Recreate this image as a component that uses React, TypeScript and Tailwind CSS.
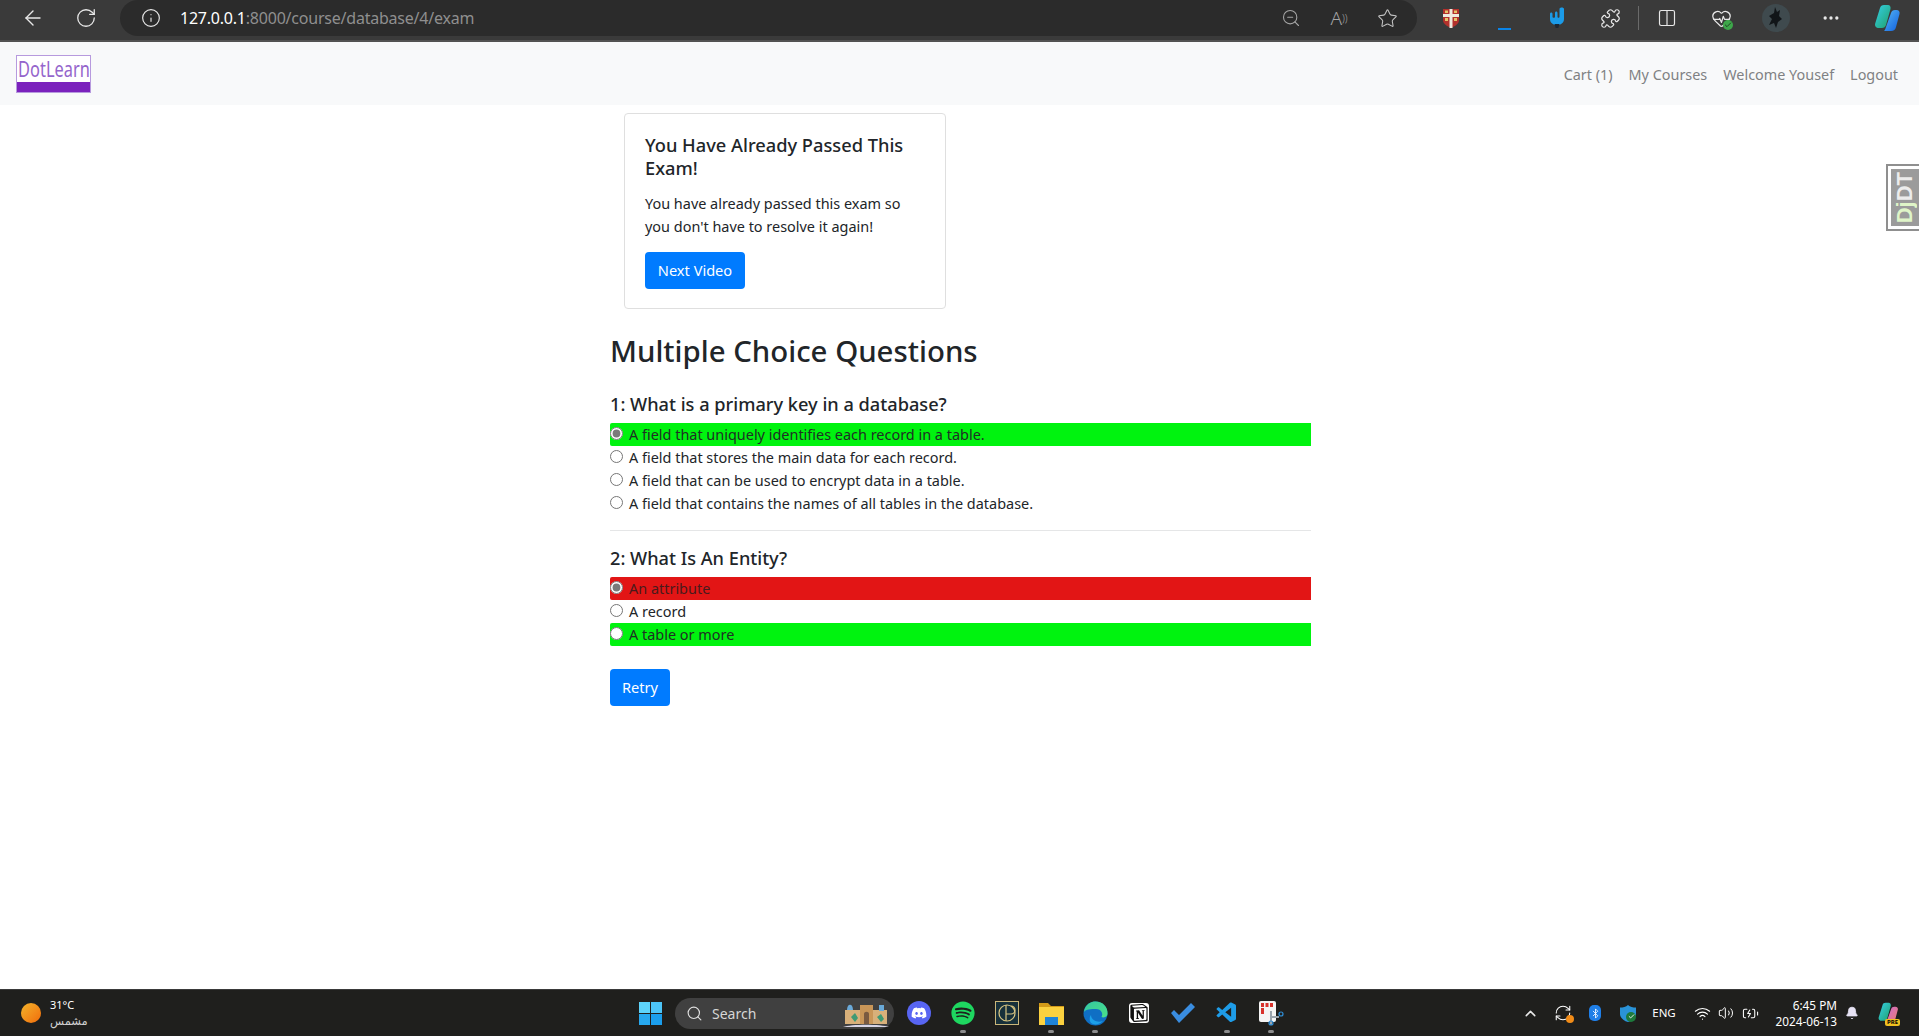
import React from "react";
import { ArrowLeft, RotateCw, Info, ZoomOut, Star, Puzzle, Columns2, MoreHorizontal, Search, ChevronUp, Wifi, Volume2, Bell, RefreshCw, Bluetooth, BatteryCharging, Check, HeartPulse } from "lucide-react";
import { FaDiscord, FaSpotify } from "react-icons/fa";
import { SiNotion } from "react-icons/si";
import { VscVscode } from "react-icons/vsc";

const body = "font-['Noto_Sans','DejaVu_Sans',sans-serif]";

function Copilot({ size = 26, pre = false }: { size?: number; pre?: boolean }) {
  return (
    <svg width={size} height={size} viewBox="0 0 28 28">
      <defs>
        <linearGradient id={pre ? "cpa" : "cpb"} x1="0" y1="0" x2="1" y2="1">
          <stop offset="0" stopColor="#35d0e8" />
          <stop offset="1" stopColor="#1fa06a" />
        </linearGradient>
        <linearGradient id={pre ? "cpc" : "cpd"} x1="0" y1="0" x2="1" y2="1">
          <stop offset="0" stopColor={pre ? "#c86dd7" : "#58b7f5"} />
          <stop offset="1" stopColor={pre ? "#f07a6a" : "#1060e0"} />
        </linearGradient>
      </defs>
      <path d="M11 1h4c2 0 3 2 2.500 4L13 21c-.6 2-2 3-4 3H6c-3 0-4.500-2-3.800-4.500L7 4c.5-2 2-3 4-3z" fill={`url(#${pre ? "cpa" : "cpb"})`} />
      <path d="M13 23l5-14c.6-2 2-3 4-3h1.500C26 6 27 8 26.500 10L23 23c-.6 2.500-2 4-5 4h-7c1-1 1.600-2.500 2-4z" fill={`url(#${pre ? "cpc" : "cpd"})`} />
    </svg>
  );
}

function TopBar() {
  return (
    <div className="flex h-[42px] shrink-0 border-b-2 border-[#525252] bg-[#3a3a3a] text-[#e8e8e8]">
      <div className="flex h-[36px] w-full items-center pl-[11px]">
        <div className="flex w-[44px] justify-center"><ArrowLeft size={24} strokeWidth={1.4} /></div>
        <div className="ml-[9px] flex w-[44px] justify-center"><RotateCw size={22} strokeWidth={1.4} /></div>
        <div className="ml-[12px] flex h-[36px] w-[1297px] items-center rounded-[18px] bg-[#2b2b2b]">
          <Info size={20} strokeWidth={1.4} className="ml-[21px]" />
          <span className="ml-[19px] text-[16px] leading-[20px] font-['Noto_Sans',sans-serif] tracking-[-0.22px]">
            <span className="text-white">127.0.0.1</span>
            <span className="text-[#8f8f8f]">:8000/course/database/4/exam</span>
          </span>
          <div className="flex-1" />
          <div className="flex w-[48px] justify-center text-[#a5a5a5]"><ZoomOut size={20} strokeWidth={1.3} /></div>
          <div className="flex w-[48px] justify-center text-[#a5a5a5]">
            <span className="font-['Noto_Sans',sans-serif] text-[19px] leading-[20px] font-light">A<span className="align-top text-[10px]">))</span></span>
          </div>
          <div className="flex w-[48px] justify-center text-[#c4c4c4]"><Star size={21} strokeWidth={1.2} /></div>
          <div className="w-[6px]" />
        </div>
        <div className="ml-[14px] flex w-[40px] justify-center">
          <svg width="16" height="20" viewBox="0 0 16 20">
            <path d="M0 1h16v11c0 4-4 6-8 8-4-2-8-4-8-8z" fill="#b3312c" />
            <path d="M6.500 1h3v19h-3zM0 6h16v3H0z" fill="#efe9dd" />
            <rect x="2" y="2.500" width="3" height="2.500" fill="#e6c36a" />
            <rect x="11" y="2.500" width="3" height="2.500" fill="#e6c36a" />
            <rect x="2" y="10" width="3" height="3" fill="#e6c36a" />
            <rect x="11" y="10" width="3" height="3" fill="#e6c36a" />
          </svg>
        </div>
        <div className="ml-[13px] flex h-[36px] w-[40px] items-end justify-center pb-[6px]">
          <div className="h-[2px] w-[13px] bg-[#0a84e8]" />
        </div>
        <div className="ml-[13px] flex w-[40px] justify-center">
          <svg width="14" height="22" viewBox="0 0 14 22">
            <path d="M0 7c0-2 2.500-2 2.500 0v3c0 1 2.500 1 2.500 0V6c0-2 2.500-2 2.500 0v4c0 1 2 1 2 0V2c0-2 4.500-2 4.500 0v10c0 4-3.500 6-7 6S0 16 0 12z" fill="#1b9be8" />
            <path d="M4.500 17h5l-1.200 4H5.700z" fill="#1c2733" />
          </svg>
        </div>
        <div className="ml-[13px] flex w-[40px] justify-center"><Puzzle size={21} strokeWidth={1.4} /></div>
        <div className="ml-[8px] h-[24px] w-px bg-[#6a6a6a]" />
        <div className="ml-[8px] flex w-[40px] justify-center"><Columns2 size={20} strokeWidth={1.4} /></div>
        <div className="relative ml-[14px] flex w-[40px] justify-center">
          <HeartPulse size={21} strokeWidth={1.4} />
          <span className="absolute top-[12px] left-[22px] flex h-[10px] w-[10px] items-center justify-center rounded-full bg-[#3da64a]">
            <Check size={8} strokeWidth={2.500} className="text-[#1c2c1c]" />
          </span>
        </div>
        <div className="ml-[15px] flex w-[40px] justify-center">
          <svg width="28" height="28" viewBox="0 0 28 28">
            <circle cx="14" cy="14" r="14" fill="#3f4a4e" />
            <path d="M13 3l2 5 3-2-1 6 3 3-4 3-2 6-2-5-5 2 3-6-3-3 5-3z" fill="#111518" />
          </svg>
        </div>
        <div className="ml-[15px] flex w-[40px] justify-center"><MoreHorizontal size={20} strokeWidth={2} /></div>
        <div className="ml-[16px] flex w-[40px] justify-center"><Copilot size={28} /></div>
      </div>
    </div>
  );
}

function Navbar() {
  const links = ["Cart (1)", "My Courses", "Welcome Yousef", "Logout"];
  return (
    <div className={`flex h-[63px] shrink-0 items-center justify-between bg-[#f8f9fa] pr-[21px] pl-[16px] ${body}`}>
      <div className="flex h-[38px] w-[75px] flex-col border border-[#b79ade] bg-white">
        <div className="flex flex-1 items-center justify-center overflow-hidden">
          <span className="scale-x-[0.78] text-[21px] leading-[24px] text-[#9565cc]">DotLearn</span>
        </div>
        <div className="h-[10px] bg-[#7b22bd]" />
      </div>
      <div className="flex gap-[16px] pt-[2px] text-[14.400px] leading-[23px] text-[#7f8183]">
        {links.map((l) => (
          <span key={l}>{l}</span>
        ))}
      </div>
    </div>
  );
}

function Option({ text, group, checked, tone }: { text: string; group: string; checked?: boolean; tone?: "green" | "red" }) {
  const bg = tone === "green" ? "bg-[#00f30f] rounded-l-[2px] text-[#1f3024]" : tone === "red" ? "bg-[#e21515] rounded-l-[2px] text-[#4a1a1c]" : "text-[#212529]";
  return (
    <label className={`flex h-[23px] items-start ${bg}`}>
      <input type="radio" name={group} defaultChecked={checked} className="mt-[4px] h-[13px] w-[13px] shrink-0 accent-[#7a7a7a]" />
      <span className="ml-[6px] pt-[1px] text-[14.450px] leading-[22px]">{text}</span>
    </label>
  );
}

function Content() {
  return (
    <div className={`ml-[610px] w-[701px] text-[#212529] ${body}`}>
      <div className="mt-[8px] ml-[14px] w-[322px] rounded-[4px] border border-[#dfdfdf] bg-white py-[19px] pr-[19px] pl-[20px]">
        <h5 className="text-[18.250px] leading-[23px] font-medium">You Have Already Passed This Exam!</h5>
        <p className="mt-[13px] text-[14.450px] leading-[23px]">You have already passed this exam so you don't have to resolve it again!</p>
        <button className="mt-[14px] flex h-[37px] w-[100px] items-center justify-center rounded-[4px] bg-[#007bff] pt-[1px] text-[14.600px] text-white">Next Video</button>
      </div>
      <h2 className="mt-[24px] text-[29.400px] leading-[37px] font-medium">Multiple Choice Questions</h2>
      <h5 className="mt-[23px] text-[18.200px] leading-[23px] font-medium">1: What is a primary key in a database?</h5>
      <div className="mt-[7px]">
        <Option group="q1" checked tone="green" text="A field that uniquely identifies each record in a table." />
        <Option group="q1" text="A field that stores the main data for each record." />
        <Option group="q1" text="A field that can be used to encrypt data in a table." />
        <Option group="q1" text="A field that contains the names of all tables in the database." />
      </div>
      <hr className="mt-[15px] border-[#e5e6e7]" />
      <h5 className="mt-[16px] text-[18.200px] leading-[23px] font-medium">2: What Is An Entity?</h5>
      <div className="mt-[7px]">
        <Option group="q2" checked tone="red" text="An attribute" />
        <Option group="q2" text="A record" />
        <Option group="q2" tone="green" text="A table or more" />
      </div>
      <button className="mt-[23px] flex h-[37px] w-[60px] items-center justify-center rounded-[4px] bg-[#007bff] pt-[1px] text-[14.600px] text-white">Retry</button>
    </div>
  );
}

function TaskIcon({ children, dot }: { children: React.ReactNode; dot?: boolean }) {
  return (
    <div className="flex h-[46px] w-[44px] flex-col items-center justify-start pt-[10px]">
      <div className="flex h-[26px] items-center justify-center">{children}</div>
      {dot && <div className="mt-[4px] h-[3px] w-[6px] rounded-full bg-[#8c8c8c]" />}
    </div>
  );
}

function Taskbar() {
  return (
    <div className="flex h-[47px] shrink-0 items-center border-t border-[#3a3a3a] bg-[#1f1f1d] text-white font-['Noto_Sans','DejaVu_Sans',sans-serif]">
      <div className="flex w-[639px] items-center pl-[21px]">
        <div className="h-[20px] w-[20px] rounded-full bg-gradient-to-br from-[#f2b32a] to-[#f06a08]" />
        <div className="ml-[9px] flex flex-col">
          <span className="text-[11px] leading-[16px]">31°C</span>
          <span className="text-[11.500px] leading-[16px] text-[#cfcfcf]">مشمس</span>
        </div>
      </div>
      <div className="grid h-[23px] w-[23px] grid-cols-2 gap-[1px]">
        <div className="bg-[#5ed4fb]" />
        <div className="bg-[#4cc4f7]" />
        <div className="bg-[#27a8ee]" />
        <div className="bg-[#1b9eec]" />
      </div>
      <div className="ml-[13px] flex h-[31px] w-[219px] items-center rounded-full bg-[#404040] pl-[11px]">
        <Search size={17} strokeWidth={1.6} className="text-[#e0e0e0]" />
        <span className="ml-[9px] pt-[1px] text-[14px] leading-[20px] text-[#d6d6d6]">Search</span>
        <div className="flex-1" />
        <svg width="46" height="28" viewBox="0 0 46 28" className="mr-[5px]">
          <path d="M0 28c8-3 38-3 46 0z" fill="#d9d6e6" />
          <rect x="2" y="11" width="42" height="14" fill="#d8b07a" />
          <rect x="17" y="6" width="13" height="19" fill="#c99658" />
          <path d="M21 25v-10c0-3 5-3 5 0v10z" fill="#7a5a40" />
          <path d="M4 11c0-7 6-7 6 0z" fill="#6aa9d8" />
          <rect x="36" y="6" width="5" height="6" fill="#6aa9d8" />
          <path d="M8 18l4-4 3 5-3 4zM34 18l4-3 3 5-3 3z" fill="#3f9a74" />
        </svg>
      </div>
      <div className="ml-[3px] flex items-start">
        <TaskIcon>
          <div className="flex h-[24px] w-[24px] items-center justify-center rounded-full bg-[#5865f2]"><FaDiscord size={16} color="#fff" /></div>
        </TaskIcon>
        <TaskIcon dot><FaSpotify size={24} color="#1ed760" /></TaskIcon>
        <TaskIcon>
          <div className="flex h-[24px] w-[24px] items-center justify-center border border-[#c9b67a] bg-[#17303a]">
            <svg width="20" height="20" viewBox="0 0 20 20" fill="none" stroke="#d8c582" strokeWidth="1.200">
              <circle cx="10" cy="10" r="8" />
              <path d="M9 2v16M9 11h5a4 4 0 0 0 0-8" />
            </svg>
          </div>
        </TaskIcon>
        <TaskIcon dot>
          <svg width="25" height="25" viewBox="0 0 25 25">
            <path d="M0 2h9l3 3h13v3H0z" fill="#d39a18" />
            <rect y="6" width="25" height="18" fill="#fbd13f" />
            <rect x="6" y="16" width="13" height="8" fill="#1f84d8" />
          </svg>
        </TaskIcon>
        <TaskIcon dot>
          <svg width="25" height="25" viewBox="0 0 25 25">
            <defs>
              <linearGradient id="edgeA" x1="0" y1="0" x2="1" y2="1">
                <stop offset="0" stopColor="#35c7a0" />
                <stop offset="1" stopColor="#4ae08a" />
              </linearGradient>
            </defs>
            <circle cx="12.500" cy="12.500" r="12" fill="#0f6fc4" />
            <path d="M1 11C2 3 8 .5 12.500.5 20 .5 25 6 24.500 13c-.2 3-4 4-6 3 2-3 0-8-5.500-8C8 8 3 8 1 11z" fill="url(#edgeA)" />
            <path d="M8 14c0 5 6 8 12 6-3 3-7 4-10 3-4-1-4-7-2-9z" fill="#1ca0e8" />
          </svg>
        </TaskIcon>
        <TaskIcon>
          <div className="flex h-[20px] w-[20px] items-center justify-center rounded-[3px] bg-white"><SiNotion size={18} color="#111" /></div>
        </TaskIcon>
        <TaskIcon>
          <svg width="24" height="20" viewBox="0 0 24 20">
            <path d="M0 10l3-3 5 5L20 0l4 4L8 20z" fill="#3a8de0" />
          </svg>
        </TaskIcon>
        <TaskIcon dot><VscVscode size={24} color="#1e9ce8" /></TaskIcon>
        <TaskIcon dot>
          <svg width="26" height="26" viewBox="0 0 26 26">
            <rect x="1" y="1" width="17" height="21" rx="2" fill="#f4f4f4" />
            <rect x="3" y="3" width="3" height="4" fill="#d8322c" />
            <rect x="7.500" y="3" width="3" height="4" fill="#d8322c" />
            <rect x="12" y="3" width="3" height="4" fill="#d8322c" />
            <rect x="3" y="8" width="3" height="6" fill="#d8322c" />
            <path d="M13 11v14M13 17h8" stroke="#9aa4ad" strokeWidth="2" />
            <circle cx="23" cy="14" r="2" fill="none" stroke="#2f8fd8" strokeWidth="1.200" />
            <circle cx="13" cy="23" r="2" fill="none" stroke="#2f8fd8" strokeWidth="1.200" />
          </svg>
        </TaskIcon>
      </div>
      <div className="flex-1" />
      <div className="flex items-center pr-[20px]">
        <ChevronUp size={17} strokeWidth={2.200} className="text-[#e8e8e8]" />
        <div className="relative ml-[15px]">
          <RefreshCw size={18} strokeWidth={1.400} />
          <span className="absolute right-[-2px] bottom-[-1px] h-[8px] w-[8px] rounded-full bg-[#f28c18]" />
        </div>
        <div className="ml-[17px] flex h-[16px] w-[12px] items-center justify-center rounded-[5px] bg-[#1f7fe8]"><Bluetooth size={11} strokeWidth={1.800} /></div>
        <div className="relative ml-[19px] flex">
          <svg width="16" height="17" viewBox="0 0 16 17"><path d="M8 0c2 2 5 2.500 8 2.500V9c0 4-4 7-8 8-4-1-8-4-8-8V2.500C3 2.500 6 2 8 0z" fill="#2a93d8" /></svg>
          <span className="absolute top-[7px] left-[6px] flex h-[10px] w-[10px] items-center justify-center rounded-full bg-[#1d7a3c]"><Check size={7} strokeWidth={3} /></span>
        </div>
        <span className="ml-[15px] w-[26px] text-center text-[11.500px] leading-[16px]">ENG</span>
        <Wifi size={17} strokeWidth={1.600} className="ml-[17px]" />
        <Volume2 size={16} strokeWidth={1.500} className="ml-[7px]" />
        <BatteryCharging size={17} strokeWidth={1.500} className="ml-[8px]" />
        <div className="ml-[16px] flex w-[62px] flex-col items-end text-[11.800px] leading-[16px] whitespace-nowrap">
          <span>6:45 PM</span>
          <span>2024-06-13</span>
        </div>
        <Bell size={14} strokeWidth={1.500} fill="#e6e2f4" className="ml-[8px] text-[#e6e2f4]" />
        <div className="relative ml-[18px] flex">
          <Copilot size={22} pre />
          <span className="absolute right-[-1px] bottom-[-2px] rounded-[2px] bg-[#f0c020] px-[2px] text-[6px] leading-[7px] font-bold text-black">PRE</span>
        </div>
      </div>
    </div>
  );
}

export default function App() {
  return (
    <div className="relative flex h-[1036px] w-[1919px] flex-col overflow-hidden bg-white">
      <TopBar />
      <Navbar />
      <main className="flex-1">
        <Content />
      </main>
      <Taskbar />
      <div className="absolute top-[164px] right-0 flex h-[67px] w-[33px] items-center justify-center border-y-2 border-l-2 border-[#8f8f8f] bg-white py-[3px] pl-[3px]">
        <div className="flex h-full w-full items-center justify-center bg-[#9b9b9b]">
          <span className="rotate-180 text-[22px] leading-[26px] font-bold [writing-mode:vertical-rl] font-['Liberation_Sans',sans-serif]">
            <span className="text-[#dff5c8]">Dj</span>
            <span className="text-[#ececec]">DT</span>
          </span>
        </div>
      </div>
    </div>
  );
}
